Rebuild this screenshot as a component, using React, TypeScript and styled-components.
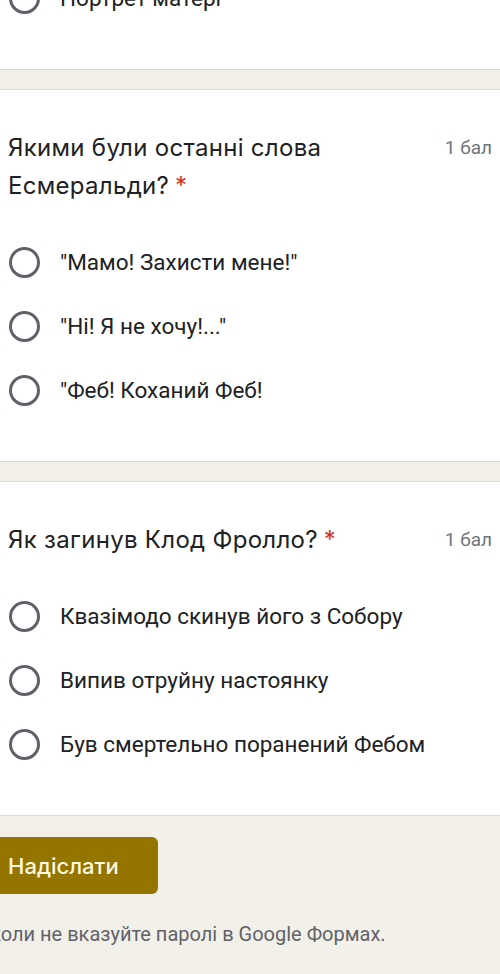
import React from "react";
import styled, { createGlobalStyle } from "styled-components";

const GlobalStyle = createGlobalStyle`
  html, body {
    margin: 0;
    padding: 0;
    background: #f3f0ea;
    overflow: hidden;
  }
  body {
    font-family: Roboto, "Noto Sans", sans-serif;
    color: #202124;
  }
`;

const Page = styled.div`
  display: flex;
  flex-direction: column;
  gap: 19px;
  /* page is scrolled: the previous question is only partly visible */
  margin-top: -34px;
  height: 1008px;
`;

const Card = styled.section<{ $first?: boolean }>`
  background: #fff;
  border-top: ${(p) => (p.$first ? "none" : "1px solid #dcd9d4")};
  border-bottom: 1px solid #dcd9d4;
  padding: ${(p) => (p.$first ? "0" : "39px")} 8px 39px 8px;
`;

const Header = styled.div`
  display: flex;
  align-items: flex-start;
  justify-content: space-between;
  gap: 16px;
`;

const Title = styled.h2`
  margin: 0;
  flex: 1;
  max-width: 380px;
  font-family: Inter, "Noto Sans", sans-serif;
  font-weight: 400;
  font-size: 24px;
  line-height: 38px;
  color: #202124;
  letter-spacing: 0.3px;
`;

const Required = styled.span`
  color: #d93025;
  margin-left: 6px;
`;

const Points = styled.span`
  font-family: Roboto, sans-serif;
  font-size: 19px;
  line-height: 38px;
  color: #70757a;
  white-space: nowrap;
`;

const Options = styled.div<{ $first?: boolean }>`
  display: flex;
  flex-direction: column;
  margin-top: ${(p) => (p.$first ? "0" : "25px")};
`;

const Option = styled.label`
  display: flex;
  align-items: center;
  height: 64px;
  gap: 20px;
  padding-left: 1px;
`;

const Radio = styled.span`
  box-sizing: border-box;
  flex: none;
  width: 31px;
  height: 31px;
  border-radius: 50%;
  border: 3px solid #5f6368;
`;

const OptionText = styled.span`
  font-family: Roboto, sans-serif;
  font-size: 22.5px;
  color: #202124;
`;

const Footer = styled.div`
  display: flex;
  flex-direction: column;
  align-items: flex-start;
  gap: 28px;
  margin-left: -29px;
  padding-top: 2px;
`;

const SubmitButton = styled.button`
  margin-left: 12px;
  height: 57px;
  width: 175px;
  box-sizing: border-box;
  border: none;
  border-radius: 6px;
  background: #947500;
  color: #fff8e1;
  font-family: Inter, Roboto, sans-serif;
  font-weight: 500;
  font-size: 22px;
  text-align: left;
  padding: 0 0 0 25px;
`;

const Notice = styled.p`
  margin: 0;
  font-family: Roboto, sans-serif;
  font-size: 20px;
  line-height: 24px;
  color: #5f6368;
`;

type Question = {
  title: string;
  options: string[];
};

const questions: Question[] = [
  {
    title: "Якими були останні слова Есмеральди?",
    options: ['"Мамо! Захисти мене!"', '"Ні! Я не хочу!..."', '"Феб! Коханий Феб!'],
  },
  {
    title: "Як загинув Клод Фролло?",
    options: [
      "Квазімодо скинув його з Собору",
      "Випив отруйну настоянку",
      "Був смертельно поранений Фебом",
    ],
  },
];

export default function App() {
  return (
    <>
      <GlobalStyle />
      <Page>
        <Card $first>
          <Options $first>
            <Option>
              <Radio />
              <OptionText>Портрет матері</OptionText>
            </Option>
          </Options>
        </Card>
        {questions.map((q) => (
          <Card key={q.title}>
            <Header>
              <Title>
                {q.title}
                <Required>*</Required>
              </Title>
              <Points>1 бал</Points>
            </Header>
            <Options>
              {q.options.map((o) => (
                <Option key={o}>
                  <Radio />
                  <OptionText>{o}</OptionText>
                </Option>
              ))}
            </Options>
          </Card>
        ))}
        <Footer>
          <SubmitButton>Надіслати</SubmitButton>
          <Notice>Ніколи не вказуйте паролі в Google Формах.</Notice>
        </Footer>
      </Page>
    </>
  );
}
